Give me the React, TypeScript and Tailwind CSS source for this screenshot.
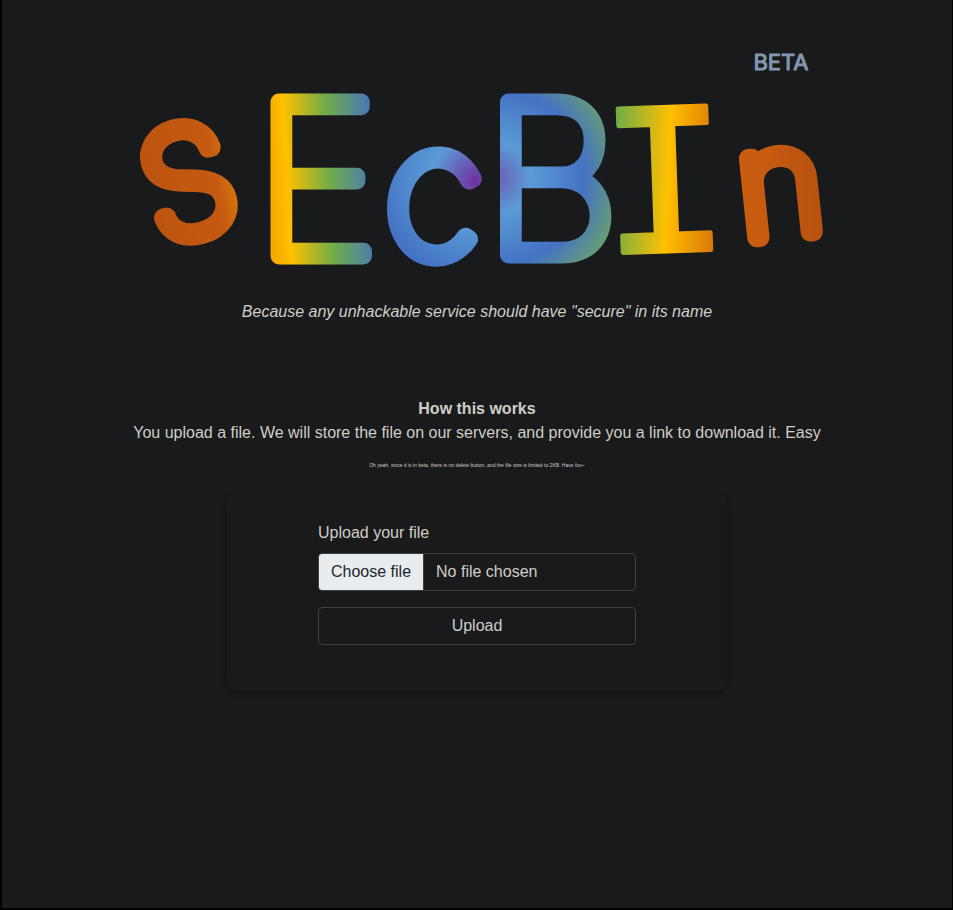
import { useState } from 'react';

type Letter = {
  char: string;
  x: number;
  y: number;
  size: number;
  weight: number;
  stroke: number;
  fill: string;
  family: string;
  rotate: number;
};

const INTER = 'Inter, sans-serif';
const MONO = '"Liberation Mono", monospace';

const letters: Letter[] = [
  { char: 'S', x: 186, y: 235, size: 146, weight: 100, stroke: 19, fill: 'url(#logo-s)', family: INTER, rotate: -16 },
  { char: 'E', x: 317, y: 256, size: 212, weight: 100, stroke: 17, fill: 'url(#logo-e)', family: INTER, rotate: 0 },
  { char: 'c', x: 434, y: 256, size: 182, weight: 100, stroke: 18, fill: 'url(#logo-c)', family: INTER, rotate: 4 },
  { char: 'B', x: 552, y: 255, size: 210, weight: 100, stroke: 17, fill: 'url(#logo-b)', family: INTER, rotate: 0 },
  { char: 'I', x: 665, y: 251, size: 218, weight: 400, stroke: 5, fill: 'url(#logo-i)', family: MONO, rotate: -2 },
  { char: 'n', x: 779, y: 235, size: 146, weight: 100, stroke: 19, fill: 'url(#logo-n)', family: INTER, rotate: -6 },
];

function Logo() {
  return (
    <svg
      viewBox="117 40 720 240"
      className="block w-[720px] max-w-full overflow-visible"
      role="img"
      aria-label="SEcBIn beta"
    >
      <defs>
        <linearGradient id="logo-s" gradientUnits="userSpaceOnUse" x1="128" y1="180" x2="246" y2="190">
          <stop offset="0" stopColor="#b9520f" />
          <stop offset="0.72" stopColor="#c55a11" />
          <stop offset="1" stopColor="#e08a0a" />
        </linearGradient>
        <linearGradient id="logo-e" gradientUnits="userSpaceOnUse" x1="267" y1="180" x2="378" y2="174">
          <stop offset="0" stopColor="#f5a500" />
          <stop offset="0.18" stopColor="#ffc000" />
          <stop offset="0.56" stopColor="#70ad47" />
          <stop offset="1" stopColor="#4472c4" />
        </linearGradient>
        <radialGradient id="logo-c" gradientUnits="userSpaceOnUse" cx="474" cy="178" r="98">
          <stop offset="0" stopColor="#7030a0" />
          <stop offset="0.45" stopColor="#5b9bd5" />
          <stop offset="1" stopColor="#4472c4" />
        </radialGradient>
        <radialGradient id="logo-b" gradientUnits="userSpaceOnUse" cx="496" cy="178" r="125">
          <stop offset="0" stopColor="#6a5fb5" />
          <stop offset="0.28" stopColor="#5b9bd5" />
          <stop offset="0.7" stopColor="#4472c4" />
          <stop offset="1" stopColor="#659d75" />
        </radialGradient>
        <linearGradient id="logo-i" gradientUnits="userSpaceOnUse" x1="614" y1="178" x2="718" y2="186">
          <stop offset="0" stopColor="#70ad47" />
          <stop offset="0.52" stopColor="#ffc000" />
          <stop offset="1" stopColor="#d87508" />
        </linearGradient>
        <linearGradient id="logo-n" gradientUnits="userSpaceOnUse" x1="733" y1="190" x2="826" y2="200">
          <stop offset="0" stopColor="#ca5f10" />
          <stop offset="0.4" stopColor="#c55a11" />
          <stop offset="1" stopColor="#b5500f" />
        </linearGradient>
      </defs>
      {letters.map((l) => (
        <text
          key={l.char}
          x={l.x}
          y={l.y}
          fontFamily={l.family}
          fontSize={l.size}
          fontWeight={l.weight}
          textAnchor="middle"
          fill={l.fill}
          stroke={l.fill}
          strokeWidth={l.stroke}
          strokeLinejoin="round"
          strokeLinecap="round"
          transform={`rotate(${l.rotate} ${l.x} ${l.y - 60})`}
        >
          {l.char}
        </text>
      ))}
      <text
        x="781"
        y="70"
        fontFamily={INTER}
        fontSize="22"
        fontWeight="400"
        textAnchor="middle"
        fill="#8497b0"
        stroke="#8497b0"
        strokeWidth="1"
        strokeLinejoin="round"
      >
        BETA
      </text>
    </svg>
  );
}

function UploadForm() {
  const [fileName, setFileName] = useState('No file chosen');

  return (
    <form
      onSubmit={(e) => e.preventDefault()}
      className="mt-6 w-full max-w-[500px] rounded-xl px-4 pt-7 pb-[46px] shadow-[0_2px_6px_rgba(0,0,0,0.4)] sm:px-[91px]"
    >
      <label htmlFor="file" className="mb-2 block">
        Upload your file
      </label>
      <div className="relative flex h-[38px] overflow-hidden rounded border border-[#3c4143]">
        <span className="flex items-center border-r border-[#3c4143] bg-[#e9ecef] px-3 text-[#212529]">Choose file</span>
        <span className="flex min-w-0 flex-1 items-center truncate px-3">{fileName}</span>
        <input
          id="file"
          type="file"
          className="absolute inset-0 cursor-pointer opacity-0"
          onChange={(e) => setFileName(e.target.files?.[0]?.name ?? 'No file chosen')}
        />
      </div>
      <button type="submit" className="mt-4 block h-[38px] w-full rounded border border-[#3c4143]">
        Upload
      </button>
    </form>
  );
}

export default function App() {
  return (
    <main className="flex min-h-screen flex-col items-center border-r border-b-2 border-l-2 border-black bg-[#181a1b] pt-10 font-['Liberation_Sans',Arial,sans-serif] text-base text-[#d1cdc7]">
      <Logo />
      <p className="mt-5 text-center italic">Because any unhackable service should have "secure" in its name</p>
      <section className="mt-[73px] text-center">
        <h1 className="font-bold">How this works</h1>
        <p>You upload a file. We will store the file on our servers, and provide you a link to download it. Easy</p>
        <p className="mt-4 text-[5px] leading-[8px]">
          Oh yeah, since it is in beta, there is no delete button, and the file size is limited to 2KB. Have fun~
        </p>
      </section>
      <UploadForm />
    </main>
  );
}
